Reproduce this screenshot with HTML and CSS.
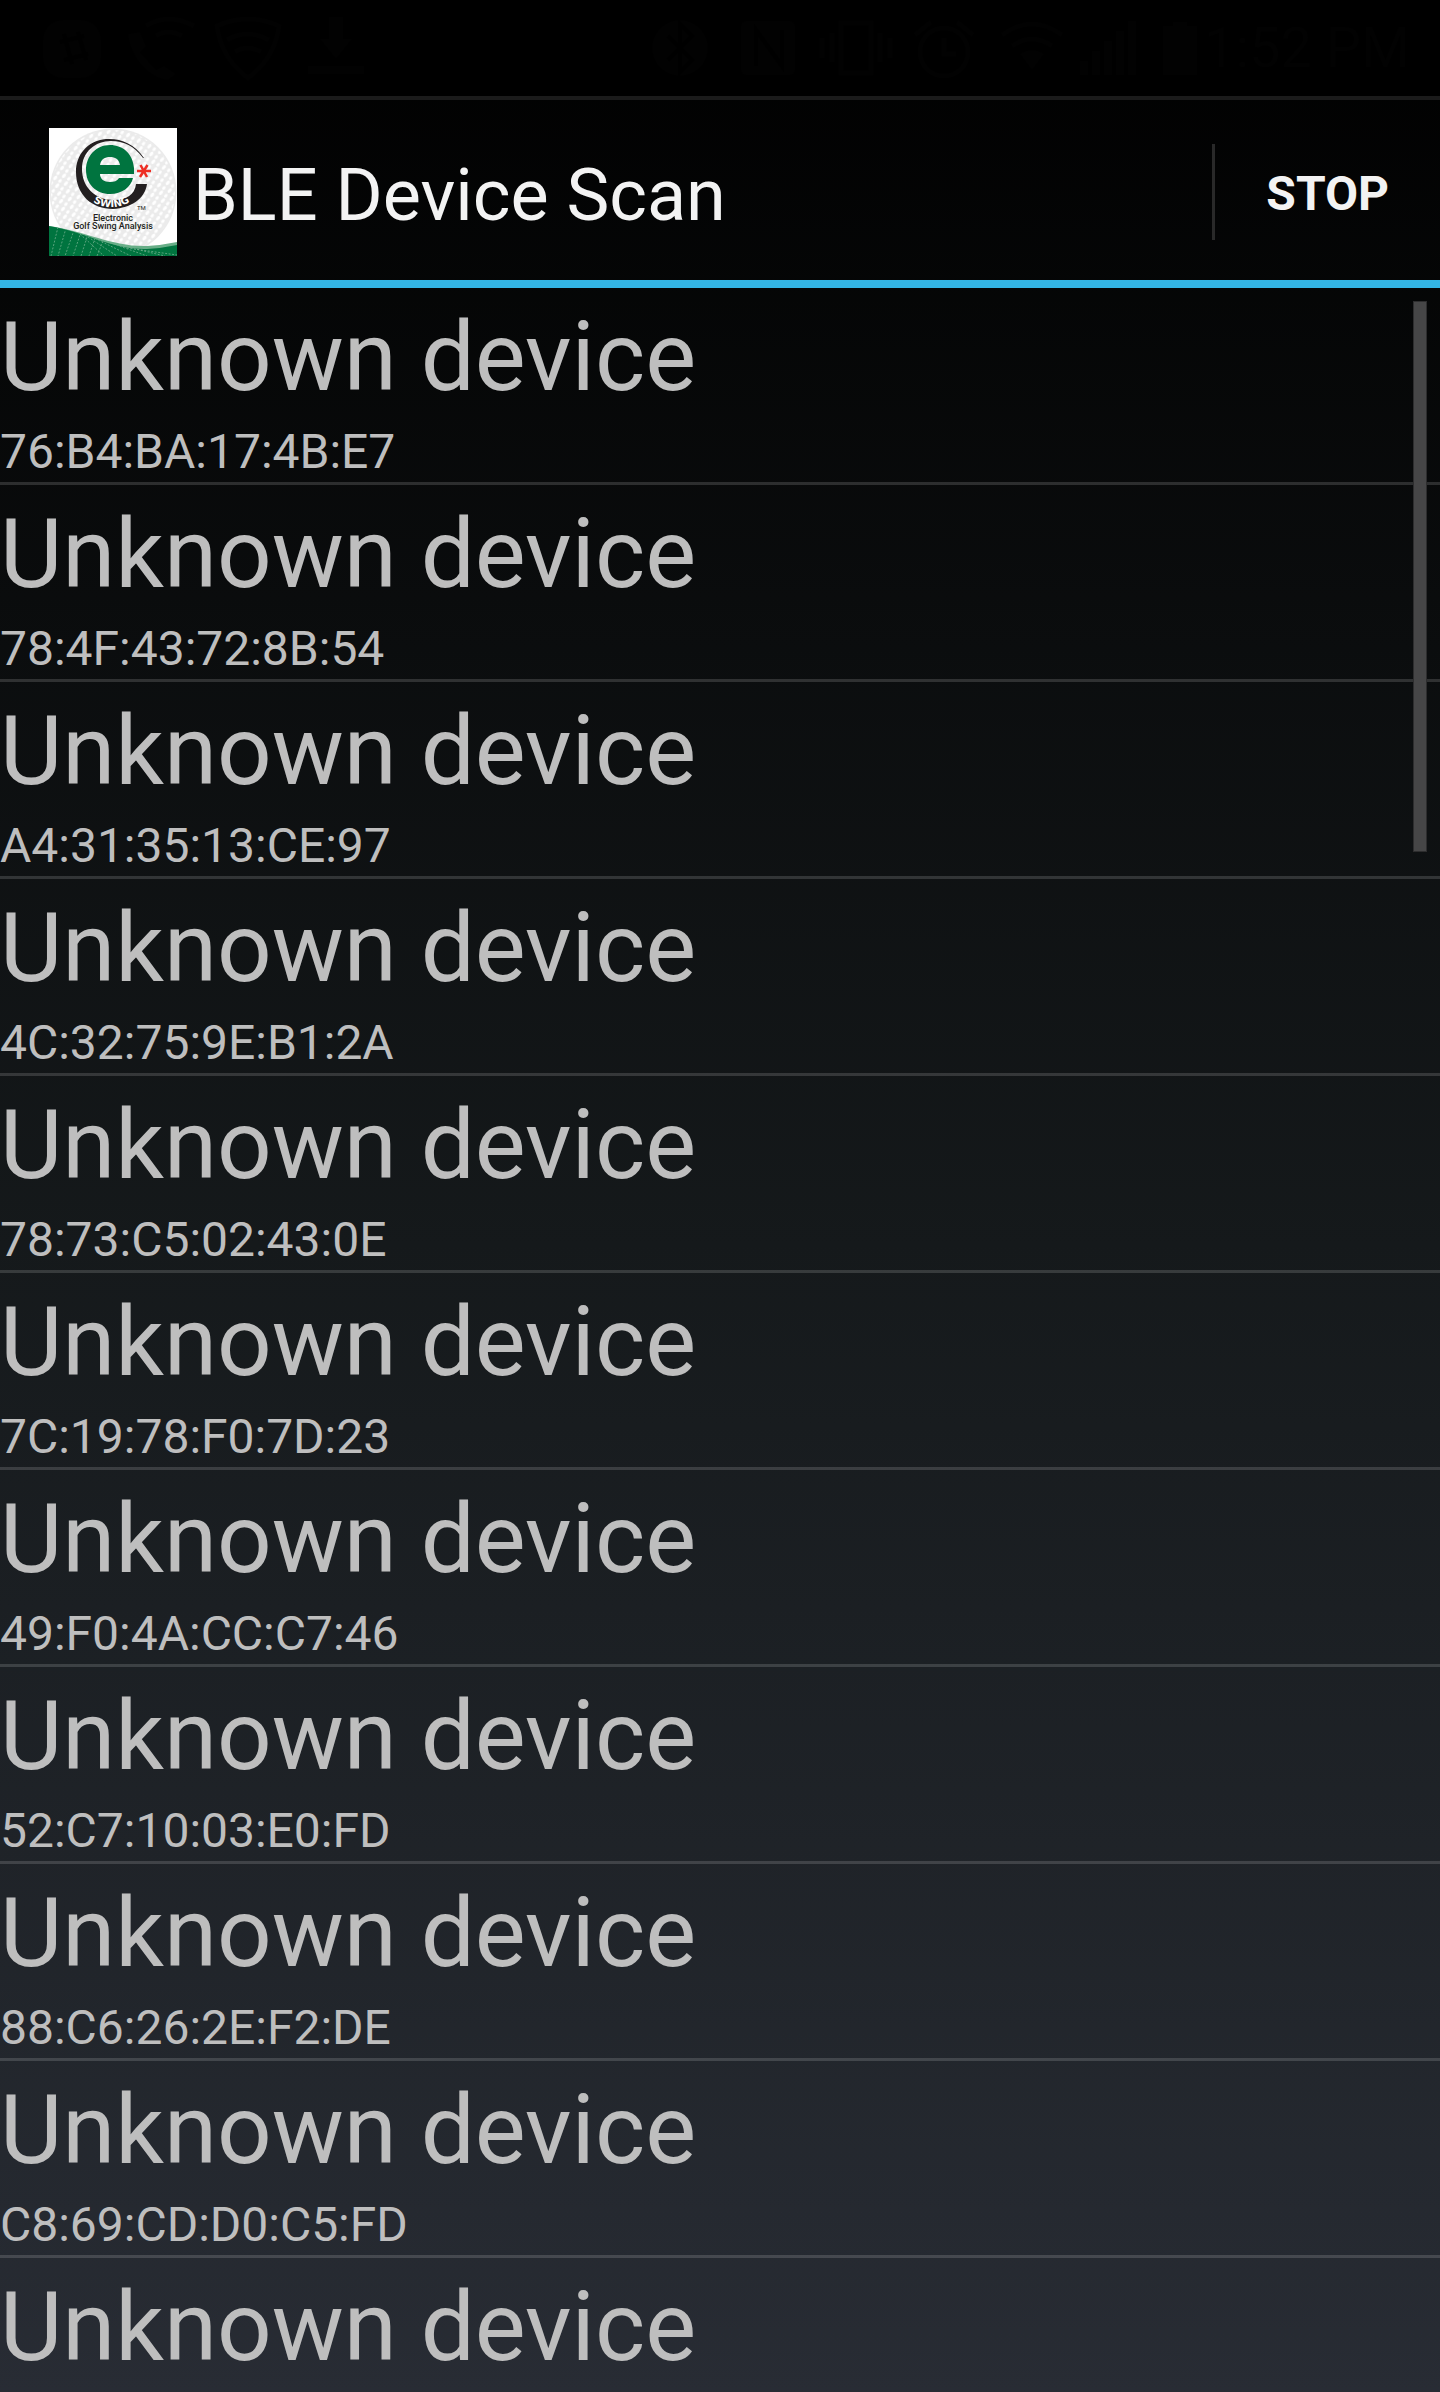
FILE: index.html
```html
<!DOCTYPE html>
<html lang="en">
<head>
<meta charset="utf-8">
<meta name="viewport" content="width=device-width, initial-scale=1">
<title>BLE Device Scan</title>
<link rel="stylesheet" href="styles.css">
</head>
<body>
<div class="status-bar">
  <svg class="status-icons" width="330" height="96" viewBox="40 0 330 96" aria-hidden="true">
    <rect x="43" y="20" width="58" height="58" rx="20"/>
    <path class="cut" d="M60 42l24-6M64 60l24-6M64 34l8 30M78 32l8 28"/>
    <path d="M128 34l12-2 6 14-6 6 16 18 8-4 12 8-8 6c-20-2-38-24-40-46Z"/>
    <path class="line" d="M146 26q22-14 48 0M156 36q12-8 26 0"/>
    <path class="line" d="M217 26q30-14 62 0-4 32-31 52-27-20-31-52ZM227 40q20-12 42 0M235 52q12-8 26 0"/>
    <path d="M329 17h14v22h9l-16 20-16-20h9ZM308 66h56v8h-56Z"/>
  </svg>
  <svg class="status-icons system" width="550" height="96" viewBox="650 0 550 96" aria-hidden="true">
    <circle cx="680" cy="48" r="28"/>
    <path class="cut" d="M668 36l24 24-12 12V24l12 12-24 24"/>
    <rect x="741" y="21" width="54" height="54" rx="5"/>
    <path class="cut" d="M756 66V30l26 36V30"/>
    <path class="line" d="M841 23h30v50h-30zM832 33v29M822 38v20M880 33v29M890 38v20"/>
    <circle class="line" cx="944" cy="52" r="24"/>
    <path class="line" d="M944 38v16h12M915 35l16-13M973 35l-16-13"/>
    <path class="line" d="M1002 35q30-22 60 0M1012 46q20-14 40 0"/>
    <path d="M1020 54q12-8 24 0l-12 16Z"/>
    <path d="M1080 61h8v14h-8ZM1092 51h8v24h-8ZM1104 41h8v34h-8ZM1116 31h8v44h-8ZM1128 21h8v54h-8Z"/>
    <path d="M1163 26h10v-4h14v4h10v49h-34Z"/>
  </svg>
  <span class="clock">1:52 PM</span>
</div>
<header class="action-bar">
  <svg class="logo" viewBox="0 0 128 128" role="img" aria-label="eSwing Electronic Golf Swing Analysis">
    <defs>
      <pattern id="dimples" width="9" height="8" patternUnits="userSpaceOnUse" patternTransform="rotate(-14)">
        <ellipse cx="3" cy="2" rx="2.6" ry="1.5" transform="rotate(-35 3 2)" fill="#fff"/>
        <ellipse cx="7" cy="6" rx="2" ry="1.4" transform="rotate(-35 7 6)" fill="#fff"/>
      </pattern>
      <path id="swing-arc" d="M33 62A34 34 0 0 0 92 62"/>
      <clipPath id="hill"><path d="M0 98C37 104 63 122 98 121Q114 120 128 117V128H0Z"/></clipPath>
    </defs>
    <rect width="128" height="128" fill="#fff"/>
    <circle cx="64" cy="64" r="63.500" fill="#ebebeb"/>
    <circle cx="64" cy="64" r="62" fill="url(#dimples)"/>
    <path d="M0 98C37 103 63 119 98 118Q114 117 128 114V128H0Z" fill="#69ae88"/>
    <path d="M0 98C37 104 63 122 98 121Q114 120 128 117V128H0Z" fill="#00743f"/>
    <g clip-path="url(#hill)" stroke="#7db697" stroke-width=".7" stroke-dasharray="2 1.500" fill="none">
      <path d="M9 99L2 128M17 100L9 128M25 102L16 128M32 104L24 128M39 106L32 128M31 106L55 128M36 107L68 128M43 109L82 128M51 111L98 128M61 115L116 128M46 110L40 128M54 113L48 128M78 120L128 127"/>
    </g>
    <path d="M95 30C85 15 71 10 57 11C38 13 27 27 27 44C27 67 43 81 64 81C82 80 96 71 98 56H87C86 67 76 72 65 72C46 72 33 59 33 41C33 24 46 13 62 13C75 13 85 18 94 30Z" fill="#231f20"/>
    <path fill-rule="evenodd" d="M85 46V40C84 26 74 17 61 17C47 17 37 28 37 42C37 56 47 66 61 66C73 66 82 59 84 50H70C68 53 65 54 61 54C55 54 51 51 51 46ZM51 37C52 31 56 29 61 29S70 31 71 37Z" fill="#00743f"/>
    <path d="M88 43H102M91.500 37L98 49M98.500 37L91 49" stroke="#ee2e24" stroke-width="2.500"/>
    <text class="logo-swing"><textPath href="#swing-arc" startOffset="50%">SWING</textPath></text>
    <text class="logo-tm" x="88" y="82">TM</text>
    <text class="logo-caption" x="64" y="93">Electronic</text>
    <text class="logo-caption" x="64" y="101">Golf Swing Analysis</text>
  </svg>
  <h1 class="title">BLE Device Scan</h1>
  <button class="stop" type="button">STOP</button>
</header>
<main class="devices">
  <ul class="device-list">
    <li class="device"><span class="name">Unknown device</span><span class="address">76:B4:BA:17:4B:E7</span></li>
    <li class="device"><span class="name">Unknown device</span><span class="address">78:4F:43:72:8B:54</span></li>
    <li class="device"><span class="name">Unknown device</span><span class="address">A4:31:35:13:CE:97</span></li>
    <li class="device"><span class="name">Unknown device</span><span class="address">4C:32:75:9E:B1:2A</span></li>
    <li class="device"><span class="name">Unknown device</span><span class="address">78:73:C5:02:43:0E</span></li>
    <li class="device"><span class="name">Unknown device</span><span class="address">7C:19:78:F0:7D:23</span></li>
    <li class="device"><span class="name">Unknown device</span><span class="address">49:F0:4A:CC:C7:46</span></li>
    <li class="device"><span class="name">Unknown device</span><span class="address">52:C7:10:03:E0:FD</span></li>
    <li class="device"><span class="name">Unknown device</span><span class="address">88:C6:26:2E:F2:DE</span></li>
    <li class="device"><span class="name">Unknown device</span><span class="address">C8:69:CD:D0:C5:FD</span></li>
    <li class="device"><span class="name">Unknown device</span></li>
  </ul>
  <div class="scroll-thumb"></div>
</main>
</body>
</html>
```
FILE: styles.css
```css
* {
  box-sizing: border-box;
}

html {
  background: #000;
}

body {
  display: flex;
  flex-direction: column;
  height: 100vh;
  margin: 0;
  overflow: hidden;
  background: linear-gradient(#000, #15191b 52%, #282c34);
  color: #bebebe;
  font-family: Roboto, "Noto Sans", sans-serif;
}

.status-bar {
  display: flex;
  flex: none;
  align-items: center;
  height: 96px;
  padding: 0 30px 0 40px;
  background: #000;
}

.status-icons {
  flex: none;
  fill: #020202;
}

.status-icons.system {
  margin-left: auto;
}

.status-icons .cut {
  fill: none;
  stroke: #000;
  stroke-width: 4;
}

.status-icons .line {
  fill: none;
  stroke: #020202;
  stroke-width: 5;
}

.clock {
  width: 210px;
  color: #020202;
  font-size: 56px;
  line-height: 64px;
  text-align: right;
  white-space: nowrap;
}

.action-bar {
  display: flex;
  flex: none;
  align-items: center;
  gap: 16px;
  height: 192px;
  padding: 4px 0 0 49px;
  border-top: 4px solid #1b1b1b;
  border-bottom: 8px solid #33b5e5;
}

.logo {
  flex: none;
  width: 128px;
  height: 128px;
}

.logo text {
  font-family: Roboto, sans-serif;
  fill: #231f20;
  text-anchor: middle;
}

.logo .logo-swing {
  font-family: "DejaVu Sans", sans-serif;
  font-size: 10px;
  font-weight: 700;
  fill: #fff;
}

.logo .logo-tm {
  font-size: 6px;
  text-anchor: start;
}

.logo .logo-caption {
  font-size: 9px;
  font-weight: 500;
}

.title {
  flex: 1;
  margin: 0;
  padding-top: 8px;
  color: #f3f3f3;
  font-size: 72px;
  font-weight: 400;
  line-height: 84px;
}

.stop {
  height: 96px;
  padding: 3px 51px 0 51px;
  border: 0;
  border-left: 3px solid #292929;
  background: none;
  color: #f3f3f3;
  font: 700 48px/56px Roboto, "Noto Sans", sans-serif;
}

.devices {
  position: relative;
  flex: 1;
  min-height: 0;
  overflow: hidden;
}

.device-list {
  margin: 0;
  padding: 0;
  list-style: none;
}

.device {
  display: flex;
  flex-direction: column;
  gap: 6px;
  padding-top: 10px;
  border-bottom: 3px solid rgba(255, 255, 255, 0.15);
}

.device:last-child {
  border-bottom: 0;
}

.name {
  font-size: 96px;
  line-height: 118px;
}

.address {
  font-size: 48px;
  line-height: 60px;
}

.scroll-thumb {
  position: absolute;
  top: 13px;
  right: 13px;
  width: 14px;
  height: 551px;
  border: 1px solid #2d2d2e;
  background: #464647;
}
```
